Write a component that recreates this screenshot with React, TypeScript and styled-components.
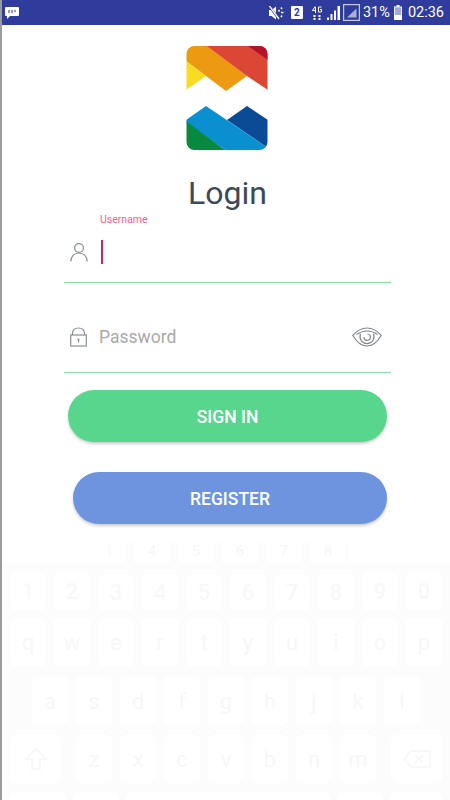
import React from "react";
import styled, { createGlobalStyle } from "styled-components";

const GlobalStyle = createGlobalStyle`
  html, body { margin: 0; padding: 0; background: #fff; }
  body { font-family: Roboto, "Liberation Sans", sans-serif; }
`;

const KEY_ROW_NUMBERS = ["1", "2", "3", "4", "5", "6", "7", "8", "9", "0"];
const KEY_ROW_TOP = ["q", "w", "e", "r", "t", "y", "u", "i", "o", "p"];
const KEY_ROW_MIDDLE = ["a", "s", "d", "f", "g", "h", "j", "k", "l"];
const KEY_ROW_BOTTOM = ["z", "x", "c", "v", "b", "n", "m"];
const GHOST_KEYS = ["3", "4", "5", "6", "7", "8"];
const SPACE_ROW_WIDTHS = [56, 44, 204, 44, 52];

export default function App() {
  return (
    <Screen>
      <GlobalStyle />
      <StatusBar>
        <NotifyIcon />
        <StatusRight>
          <MuteIcon />
          <SimBadge>2</SimBadge>
          <NetworkIcon />
          <SignalIcon />
          <BoxSignalIcon />
          <StatusText>31%</StatusText>
          <BatteryIcon />
          <StatusText>02:36</StatusText>
        </StatusRight>
      </StatusBar>

      <Form>
        <Logo />
        <Title>Login</Title>
        <FloatingLabel>Username</FloatingLabel>
        <UsernameField>
          <UserIcon />
          <Cursor />
        </UsernameField>
        <PasswordField>
          <LockIcon />
          <Placeholder>Password</Placeholder>
          <EyeIcon />
        </PasswordField>
        <SignInButton>SIGN IN</SignInButton>
        <RegisterButton>REGISTER</RegisterButton>
      </Form>

      <GhostRow>
        {GHOST_KEYS.map((k) => (
          <GhostKey key={k}>{k}</GhostKey>
        ))}
      </GhostRow>
      <Keyboard>
        <KeyRow $height={38}>
          {KEY_ROW_NUMBERS.map((k, i) => (
            <Key key={k} $inset={i > 1 && i < 8}>
              {k}
            </Key>
          ))}
        </KeyRow>
        <KeyRow $height={48}>
          {KEY_ROW_TOP.map((k) => (
            <Key key={k}>{k}</Key>
          ))}
        </KeyRow>
        <MiddleRow>
          {KEY_ROW_MIDDLE.map((k) => (
            <Key key={k}>{k}</Key>
          ))}
        </MiddleRow>
        <KeyRow $height={48}>
          <WideKey>
            <ShiftIcon />
          </WideKey>
          <LetterGroup>
            {KEY_ROW_BOTTOM.map((k) => (
              <Key key={k}>{k}</Key>
            ))}
          </LetterGroup>
          <WideKey>
            <BackspaceIcon />
          </WideKey>
        </KeyRow>
        <SpaceRow>
          {SPACE_ROW_WIDTHS.map((w, i) => (
            <SpaceKey key={i} $width={w} />
          ))}
        </SpaceRow>
      </Keyboard>
    </Screen>
  );
}

function NotifyIcon() {
  return (
    <svg width="14" height="12" viewBox="0 0 14 12">
      <path d="M1 0h12a1 1 0 0 1 1 1v7a1 1 0 0 1-1 1H5l-3 3V9H1a1 1 0 0 1-1-1V1a1 1 0 0 1 1-1z" fill="#fff" />
      <path d="M3 3h2v3H3zM6 3h2v3H6zM9 3h2v2H9z" fill="#8f97c9" />
    </svg>
  );
}

function MuteIcon() {
  return (
    <StatusSvg $right={7} width="15" height="14" viewBox="0 0 15 14">
      <path d="M0 4h2.500L7 0.500v13L2.500 10H0z" fill="#fff" />
      <path d="M0.500 0.500l9 12" stroke="#2f3c9c" strokeWidth="2.400" />
      <path d="M0.500 0l9.500 13" stroke="#fff" strokeWidth="1.300" />
      <path d="M9.500 4l1 1.500M12 1.500l1 1.500M12 6.500h2.500M12 11l1-1.500" stroke="#fff" strokeWidth="1.500" fill="none" />
    </StatusSvg>
  );
}

function NetworkIcon() {
  return (
    <StatusSvg $right={5} width="10" height="14" viewBox="0 0 10 14">
      <path d="M3 0.500L0.500 4.500H4M3.500 1v6" stroke="#fff" strokeWidth="1" fill="none" />
      <path d="M9.500 1H6.500v5h3V3.500H8" stroke="#fff" strokeWidth="1" fill="none" />
      <path d="M1.500 9h2v2h-2zM1.500 12h2v2h-2zM6.500 9h2v2h-2zM6.500 12h2v2h-2z" fill="#fff" />
    </StatusSvg>
  );
}

function SignalIcon() {
  return (
    <StatusSvg $right={3} width="13" height="14" viewBox="0 0 13 14">
      <path d="M0 11.500h2V14H0zM3.500 8h2v6h-2zM7 4.500h2V14H7z" fill="#fff" />
      <path d="M10.500 0H13v14h-2.500z" fill="#fff" />
    </StatusSvg>
  );
}

function BoxSignalIcon() {
  return (
    <StatusSvg $right={3} width="17" height="17" viewBox="0 0 17 17">
      <rect x="0.600" y="0.600" width="15.800" height="15.800" fill="none" stroke="#c4c9e6" strokeWidth="1.200" />
      <path d="M4 13.500L13.500 4.500v9z" fill="#a9afd9" />
    </StatusSvg>
  );
}

function BatteryIcon() {
  return (
    <StatusSvg $left={4} $right={6} width="8" height="15" viewBox="0 0 8 15">
      <path d="M2.500 0h3v1.500H8V15H0V1.500h2.500z" fill="#fff" />
      <path d="M0.800 2.300h6.400V10H0.800z" fill="#a4aad6" />
    </StatusSvg>
  );
}

function Logo() {
  return (
    <LogoSvg width="82" height="104" viewBox="0 0 82 104">
      <defs>
        <clipPath id="logoClip">
          <rect x="0.500" width="81" height="104" rx="8" />
        </clipPath>
      </defs>
      <g clipPath="url(#logoClip)">
        <path d="M0 0H22L61 30 40 45 20 30 0 15z" fill="#ec9a12" />
        <path d="M0 15L20 30 0 44z" fill="#f7dc22" />
        <path d="M21 0H82V44L61 30z" fill="#dc4735" />
        <path d="M62 0H82V14z" fill="#b3122b" />
        <path d="M41 74L61 60 82 74V102z" fill="#0b4a94" />
        <path d="M0 74L20 60 82 102V104H39L0 76z" fill="#0a90d0" />
        <path d="M0 75L39 104H0z" fill="#088a3e" />
      </g>
    </LogoSvg>
  );
}

function UserIcon() {
  return (
    <svg width="18" height="20" viewBox="0 0 18 20" fill="none" stroke="#8a8f94" strokeWidth="1.200">
      <circle cx="9" cy="6" r="4.400" />
      <path d="M0.800 19.500c0-5 3.500-8.500 8.200-8.500s8.200 3.500 8.200 8.500" />
    </svg>
  );
}

function LockIcon() {
  return (
    <svg width="18" height="20" viewBox="0 0 18 20" fill="none" stroke="#8a8f94" strokeWidth="1.200">
      <rect x="0.700" y="8" width="15.600" height="11" />
      <path d="M2.500 8V6.500C2.500 3 5 1 8.500 1s6 2 6 5.500V8" />
      <circle cx="8.500" cy="12.500" r="1.100" fill="#8a8f94" stroke="none" />
      <path d="M8.500 13v2.500" />
    </svg>
  );
}

function EyeIcon() {
  return (
    <EyeSvg width="30" height="20" viewBox="0 0 30 20" fill="none" stroke="#85898d" strokeWidth="1.200">
      <path d="M0.800 8.500C5 3.500 10 1 15 1s10 2.500 14.200 7.500c-3.500 6-8.500 10.500-14.200 10.500S4.300 14.500 0.800 8.500z" />
      <path d="M4.500 7.500C8 5 11.500 4 15 4s7 1 10.500 3.500" />
      <path d="M8.500 7a7 7 0 1 0 13 0" />
      <path d="M12 10a3.200 3.200 0 1 0 3.500-3" />
    </EyeSvg>
  );
}

function ShiftIcon() {
  return (
    <svg width="22" height="22" viewBox="0 0 22 22" fill="none" stroke="#f6f6f6" strokeWidth="1.500">
      <path d="M11 1L1 11h6v10h8V11h6z" />
    </svg>
  );
}

function BackspaceIcon() {
  return (
    <svg width="28" height="18" viewBox="0 0 28 18" fill="none" stroke="#f6f6f6" strokeWidth="1.500">
      <path d="M8 1h19v16H8L1 9z" />
      <path d="M12 5l8 8M20 5l-8 8" />
    </svg>
  );
}

const Screen = styled.div`
  width: 450px;
  height: 800px;
  box-sizing: border-box;
  border-left: 2px solid #9b9b9b;
  background: #fff;
  overflow: hidden;
  display: flex;
  flex-direction: column;
`;

const StatusBar = styled.div`
  height: 25px;
  flex-shrink: 0;
  margin-left: -2px;
  background: #2f3c9c;
  display: flex;
  align-items: center;
  justify-content: space-between;
  padding: 0 6px 0 5px;
  color: #fff;
`;

const StatusRight = styled.div`
  display: flex;
  align-items: center;
`;

const StatusSvg = styled.svg<{ $left?: number; $right?: number }>`
  display: block;
  margin-left: ${({ $left }) => $left ?? 0}px;
  margin-right: ${({ $right }) => $right ?? 0}px;
`;

const StatusText = styled.span`
  font-size: 14.500px;
  line-height: 25px;
  color: #fff;
`;

const SimBadge = styled.span`
  width: 12px;
  height: 13px;
  margin-right: 9px;
  background: #fff;
  color: #2f3c9c;
  border-radius: 1px;
  font-size: 10px;
  font-weight: 700;
  line-height: 13px;
  text-align: center;
`;

const Form = styled.div`
  width: 327px;
  height: 518px;
  flex-shrink: 0;
  margin-left: 62px;
  display: flex;
  flex-direction: column;
`;

const LogoSvg = styled.svg`
  display: block;
  margin: 21px 0 0 122px;
  flex-shrink: 0;
`;

const Title = styled.h1`
  margin: 24px 0 0;
  font-size: 32px;
  font-weight: 400;
  line-height: 38px;
  text-align: center;
  color: #3c4a57;
`;

const FloatingLabel = styled.div`
  margin: 1px 0 0 36px;
  font-size: 10.500px;
  line-height: 14px;
  color: #ff5a8a;
`;

const FieldRow = styled.div`
  box-sizing: border-box;
  display: flex;
  align-items: center;
  flex-shrink: 0;
  border-bottom: 1.500px solid #86dfa6;
`;

const UsernameField = styled(FieldRow)`
  height: 56px;
  padding: 0 0 6px 6px;
  gap: 13px;
`;

const PasswordField = styled(FieldRow)`
  height: 90px;
  padding: 18px 9px 0 6px;
  gap: 11px;
`;

const Cursor = styled.div`
  width: 2px;
  height: 24px;
  background: #e8175d;
`;

const Placeholder = styled.span`
  flex: 1;
  font-size: 17.500px;
  color: #a9a9a9;
`;

const EyeSvg = styled.svg`
  display: block;
`;

const PillButton = styled.div`
  box-sizing: border-box;
  height: 52px;
  flex-shrink: 0;
  padding-top: 2px;
  border-radius: 26px;
  display: flex;
  align-items: center;
  justify-content: center;
  color: #fff;
  font-size: 17.500px;
  font-weight: 500;
  box-shadow: 0 2px 3px rgba(0, 0, 0, 0.2);
`;

const SignInButton = styled(PillButton)`
  margin: 17px 4px 0 4px;
  background: #58d68d;
`;

const RegisterButton = styled(PillButton)`
  margin: 30px 4px 0 9px;
  background: #6e94e0;
`;

const GhostRow = styled.div`
  height: 20px;
  flex-shrink: 0;
  margin-left: 106px;
  width: 240px;
  background: #fcfcfc;
  display: flex;
  gap: 8px;
  overflow: hidden;
`;

const GhostKey = styled.div`
  width: 36px;
  height: 20px;
  flex-shrink: 0;
  background: #fff;
  color: #f6f6f6;
  font-size: 15px;
  line-height: 16px;
  text-align: center;

  &:first-child {
    margin-left: -18px;
  }
`;

const Keyboard = styled.div`
  flex: 1;
  background: #fcfcfc;
  padding: 9px 8px 0 8px;
  display: flex;
  flex-direction: column;
  gap: 8px;
`;

const KeyRow = styled.div<{ $height: number }>`
  height: ${({ $height }) => $height}px;
  flex-shrink: 0;
  display: flex;
  justify-content: space-between;
`;

const MiddleRow = styled(KeyRow).attrs({ $height: 48 })`
  margin-top: 3px;
  padding: 0 22px;
  margin-bottom: 2px;
`;

const SpaceRow = styled(KeyRow).attrs({ $height: 20 })`
  margin-top: 2px;
`;

const SpaceKey = styled.div<{ $width: number }>`
  width: ${({ $width }) => $width}px;
  background: #fff;
  border-radius: 5px;
`;

const LetterGroup = styled.div`
  display: flex;
  gap: 8px;
`;

const Key = styled.div<{ $inset?: boolean }>`
  width: 36px;
  margin-top: ${({ $inset }) => ($inset ? 3 : 0)}px;
  background: #fff;
  border-radius: 5px;
  display: flex;
  align-items: center;
  justify-content: center;
  color: #f7f7f7;
  font-size: 22px;
`;

const WideKey = styled(Key)`
  width: 51px;
`;
